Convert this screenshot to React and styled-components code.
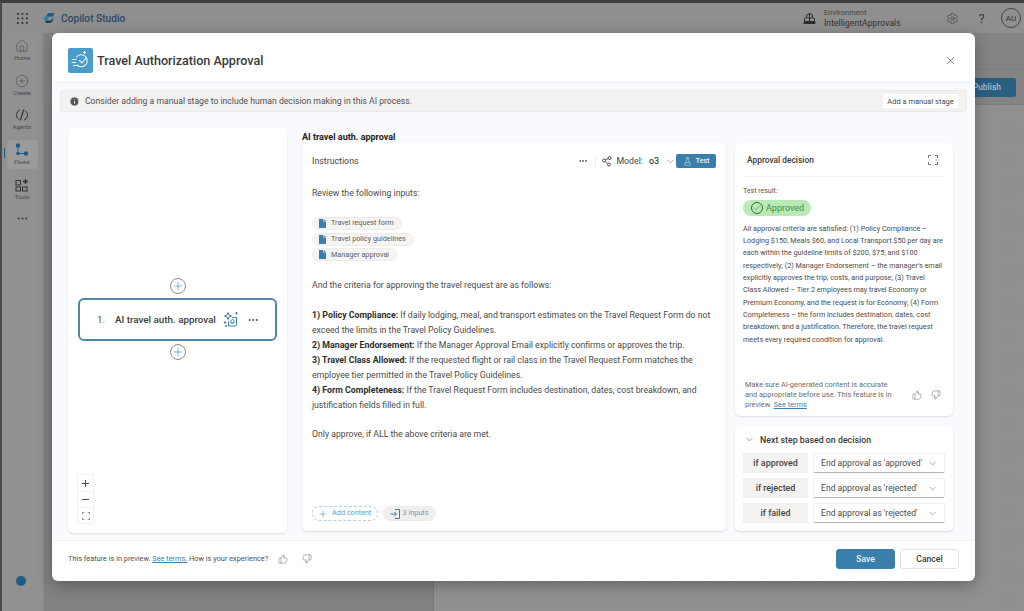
import styled, { createGlobalStyle } from "styled-components";
import {
  Home,
  CirclePlus,
  X,
  Plus,
  Minus,
  Settings,
  ChevronDown,
  ThumbsUp,
  ThumbsDown,
  FlaskConical,
  Ellipsis,
  Info,
  Check,
} from "lucide-react";

const ACCENT = "#3a7fab";
const FONT = `Roboto, "Open Sans", "Liberation Sans", sans-serif`;

const GlobalStyle = createGlobalStyle`
  html, body { margin: 0; padding: 0; height: 100%; overflow: hidden; }
  body { font-family: ${FONT}; color: #3b3b3b; }
  * { box-sizing: border-box; }
`;

const Shell = styled.div`
  position: relative;
  width: 1024px;
  height: 611px;
  display: flex;
  flex-direction: column;
  background: #848484;
  border-top: 3px solid #3f3f3f;
  border-left: 2px solid #4a4a4a;
  overflow: hidden;
`;

const TopBar = styled.header`
  height: 30px;
  flex: none;
  display: flex;
  align-items: center;
  background: #8f8f8f;
  color: #2f2f2f;
  padding-left: 15px;
`;

const Brand = styled.span`
  font-size: 10.2px;
  font-weight: 500;
  color: #2b4b63;
  margin-left: 6px;
`;

const Spacer = styled.div`
  flex: 1;
`;

const EnvText = styled.div`
  display: flex;
  flex-direction: column;
  margin: 0 18px 0 8px;
  width: 96px;
  line-height: 10px;
`;

const EnvLabel = styled.span`
  font-size: 7.6px;
  color: #444;
`;

const EnvName = styled.span`
  font-size: 8.7px;
  color: #333;
`;

const TopIcon = styled.span`
  display: flex;
  width: 29px;
  justify-content: center;
  font-size: 13px;
  color: #3c3c3c;
`;

const Avatar = styled.span`
  width: 20px;
  height: 20px;
  margin: 0 3px 0 5px;
  border: 1px solid #444;
  border-radius: 50%;
  font-size: 8px;
  display: flex;
  align-items: center;
  justify-content: center;
`;

const Body = styled.div`
  flex: 1;
  display: flex;
  min-height: 0;
`;

const Sidebar = styled.nav`
  width: 42px;
  flex: none;
  background: #919191;
  border-right: 1px solid #868686;
  display: flex;
  flex-direction: column;
  align-items: center;
  padding: 3px 1px 0 0;
  position: relative;
`;

const NavItem = styled.div`
  position: relative;
  width: 31px;
  height: 29px;
  margin-bottom: 5.7px;
  border-radius: 4px;
  display: flex;
  flex-direction: column;
  align-items: center;
  justify-content: center;
  font-size: 6px;
  line-height: 8px;
  color: #484848;
  background: ${(p) => (p.$active ? "#9b9b9b" : "transparent")};
  svg { margin-bottom: 1px; }
  ${(p) =>
    p.$active &&
    `&::before {
      content: "";
      position: absolute;
      left: -3px;
      top: 8px;
      width: 1.5px;
      height: 10px;
      background: #235a80;
    }`}
`;

const MoreNav = styled.div`
  display: flex;
  margin-top: 3px;
  color: #3c3c3c;
`;

const HelpDot = styled.span`
  margin: auto 2px 25px 0;
  width: 10px;
  height: 10px;
  border-radius: 50%;
  background: #1f5b85;
`;

const Workspace = styled.main`
  flex: 1;
  display: flex;
  flex-direction: column;
`;

const SubBar = styled.div`
  height: 36px;
  margin-top: 36px;
  flex: none;
  display: flex;
  justify-content: flex-end;
  align-items: center;
  padding-right: 8px;
  border-top: 1px solid #7d7d7d;
  border-bottom: 1px solid #7d7d7d;
`;

const PublishButton = styled.button`
  width: 60px;
  height: 19px;
  border: none;
  border-radius: 2px;
  background: #2b5f80;
  color: #a5c0d2;
  font: 500 8.5px ${FONT};
  text-align: right;
  padding-right: 15px;
`;

const Panes = styled.div`
  flex: 1;
  display: flex;
`;

const FlowList = styled.div`
  width: 390px;
  flex: none;
  background: #828282;
  border-right: 1px solid #787878;
`;

const DotCanvas = styled.div`
  flex: 1;
  background-color: #909090;
  background-image: radial-gradient(#858585 0.6px, transparent 0.8px);
  background-size: 11px 11px;
`;

const Modal = styled.section`
  position: absolute;
  left: 50px;
  top: 30px;
  width: 923px;
  height: 548px;
  border-radius: 6px;
  background: #fff;
  display: flex;
  flex-direction: column;
  box-shadow: 0 4px 16px rgba(0, 0, 0, 0.3);
  overflow: hidden;
`;

const ModalHeader = styled.div`
  height: 50px;
  flex: none;
  display: flex;
  align-items: center;
  padding: 5px 16px 0;
  gap: 4px;
  border-bottom: 1px solid #eef1f5;
`;

const LogoTile = styled.div`
  width: 25px;
  height: 25px;
  border-radius: 2px;
  background: #4a9ccb;
  display: flex;
  align-items: center;
  justify-content: center;
`;

const ModalTitle = styled.h1`
  margin: 0;
  flex: 1;
  font-size: 12.6px;
  font-weight: 500;
  color: #3a3a3a;
`;

const CloseIcon = styled.span`
  display: flex;
  margin-right: 2px;
  color: #444;
`;

const Content = styled.div`
  flex: 1;
  min-height: 0;
  background: #f8fafd;
  padding: 7px 8px 0;
  display: flex;
  flex-direction: column;
`;

const Banner = styled.div`
  height: 22px;
  flex: none;
  background: #f3f2f0;
  border: 1px solid #ebeae8;
  border-radius: 2px;
  display: flex;
  align-items: center;
  padding: 0 8px;
  gap: 5px;
  font-size: 8.65px;
  color: #505050;
`;

const BannerButton = styled.button`
  margin-left: auto;
  height: 14px;
  width: 75px;
  border: none;
  background: #fff;
  padding: 0;
  font: 7.5px ${FONT};
  color: #4a4a4a;
`;

const Columns = styled.div`
  flex: 1;
  min-height: 0;
  display: flex;
  align-items: flex-start;
  padding: 16px 0 7px 8px;
`;

const CanvasPanel = styled.div`
  position: relative;
  flex: none;
  width: 219px;
  height: 405px;
  margin-right: 15px;
  background: #fff;
  border-radius: 5px;
  box-shadow: 0 1px 2px rgba(0, 0, 0, 0.12);
  display: flex;
  flex-direction: column;
  align-items: center;
  padding-top: 150px;
`;

const AddStep = styled.span`
  width: 16px;
  height: 16px;
  border-radius: 50%;
  border: 1px solid #8e8e8e;
  background: #fff;
  color: ${ACCENT};
  display: flex;
  align-items: center;
  justify-content: center;
  margin: 0 0 4px;
  & + div + & {
    margin: 3px 0 0;
  }
`;

const StageCard = styled.div`
  width: 199px;
  height: 43px;
  border: 2px solid #4f88ab;
  border-radius: 6px;
  display: flex;
  align-items: center;
  padding: 0 16px 0 17px;
  font-size: 9.8px;
  color: #3c3c3c;
`;

const StageNumber = styled.span`
  color: #555;
  margin-right: 10px;
`;

const StageName = styled.span`
  font-weight: 500;
  white-space: nowrap;
`;

const StageIcon = styled.span`
  display: flex;
  margin: 0 auto 0 6px;
`;

const ZoomControls = styled.div`
  position: absolute;
  left: 9px;
  bottom: 9px;
  width: 17px;
  display: flex;
  flex-direction: column;
  border: 1px solid #f1f1f1;
  background: #fff;
`;

const ZoomButton = styled.span`
  height: 16px;
  display: flex;
  align-items: center;
  justify-content: center;
  color: #3c3c3c;
  & + & {
    border-top: 1px solid #f1f1f1;
  }
`;

const MiddleColumn = styled.div`
  flex: none;
  width: 424px;
  margin-right: 9px;
  display: flex;
  flex-direction: column;
`;

const StepTitle = styled.h2`
  margin: 0;
  height: 15px;
  line-height: 18px;
  font-size: 9px;
  font-weight: 700;
  color: #222;
`;

const InstructionsCard = styled.div`
  height: 388px;
  background: #fff;
  border-radius: 5px;
  box-shadow: 0 1px 2px rgba(0, 0, 0, 0.12);
  padding: 0 10px;
  display: flex;
  flex-direction: column;
  font-size: 8.7px;
  line-height: 14.9px;
  color: #4a4a4a;
`;

const CardHeader = styled.div`
  height: 36px;
  flex: none;
  display: flex;
  align-items: center;
  font-size: 8.8px;
  color: #444;
`;

const HeaderDivider = styled.span`
  width: 1px;
  height: 12px;
  background: #ececec;
  margin: 0 6px 0 7px;
`;

const ModelLabel = styled.span`
  margin-left: 4px;
  margin-right: 6px;
  font-size: 8.8px;
`;

const ModelValue = styled.span`
  font-weight: 500;
  margin-right: 6px;
`;

const TestButton = styled.button`
  width: 40px;
  height: 14px;
  border: none;
  border-radius: 2px;
  background: ${ACCENT};
  color: #e9f2f7;
  padding: 0;
  display: flex;
  align-items: center;
  justify-content: center;
  gap: 4px;
  font: 500 7px ${FONT};
`;

const Paragraph = styled.p`
  margin: 0;
  min-height: 14.9px;
`;

const Intro = styled(Paragraph)`
  margin-top: 7px;
  margin-bottom: 16px;
`;

const ChipList = styled.div`
  display: flex;
  flex-direction: column;
  align-items: flex-start;
  gap: 2.7px;
  margin-bottom: 17px;
`;

const FileChip = styled.span`
  height: 13px;
  display: inline-flex;
  align-items: center;
  gap: 5px;
  padding: 0 7px 0 6px;
  border: 1px solid #ececec;
  border-radius: 7px;
  background: #f5f4f3;
  font-size: 7.25px;
  line-height: 12px;
  color: #606060;
`;

const Criterion = styled.b`
  font-weight: 700;
  font-size: 8.8px;
  color: #2e2e2e;
`;

const CardFooter = styled.div`
  margin-top: auto;
  margin-bottom: 10px;
  display: flex;
  gap: 5px;
`;

const FooterChip = styled.span`
  height: 15px;
  display: inline-flex;
  align-items: center;
  gap: ${(p) => (p.$dashed ? "4px" : "3px")};
  border-radius: 8px;
  padding: ${(p) => (p.$dashed ? "0 5px 0 5px" : "0 6px 0 6px")};
  font-size: 7.3px;
  color: #6a9dbd;
  border: 1px ${(p) => (p.$dashed ? "dashed #b8d0df" : "solid #eeecea")};
  background: ${(p) => (p.$dashed ? "#fff" : "#f1efed")};
`;

const RightColumn = styled.div`
  flex: none;
  width: 218px;
  display: flex;
  flex-direction: column;
  gap: 10px;
  padding-top: 15px;
`;

const DecisionCard = styled.div`
  height: 273px;
  background: #fff;
  border-radius: 5px;
  box-shadow: 0 1px 2px rgba(0, 0, 0, 0.12);
  padding: 0 8px;
  display: flex;
  flex-direction: column;
`;

const DecisionHeader = styled.div`
  height: 34px;
  margin: 0 2px 0 2px;
  flex: none;
  display: flex;
  align-items: center;
  justify-content: space-between;
  padding: 1px 5px 0 2px;
  font-size: 8.4px;
  font-weight: 500;
  color: #3a3a3a;
  border-bottom: 1px solid #f0f0f0;
`;

const ResultLabel = styled.div`
  margin-top: 7.5px;
  font-size: 7px;
  line-height: 12px;
  color: #555;
`;

const ApprovedPill = styled.div`
  width: 68px;
  height: 16px;
  margin-top: 3.5px;
  border-radius: 8px;
  background: #b9eab5;
  color: #3f8f4b;
  display: flex;
  align-items: center;
  gap: 3px;
  padding-left: 8px;
  font-size: 9px;
`;

const CheckRing = styled.span`
  width: 12px;
  height: 12px;
  border-radius: 50%;
  border: 1px solid #2f6b3a;
  color: #2f6b3a;
  display: flex;
  align-items: center;
  justify-content: center;
`;

const ResultText = styled.p`
  margin: 6.5px 0 0;
  padding-right: 1px;
  font-size: 7.25px;
  line-height: 12.35px;
  color: #4c4c4c;
`;

const Disclaimer = styled.div`
  margin-top: auto;
  margin-bottom: 6px;
  padding-left: 2px;
  display: flex;
  align-items: center;
  font-size: 7.4px;
  line-height: 10px;
  color: #6c6c6c;
`;

const DisclaimerText = styled.div`
  width: 148px;
`;

const Feedback = styled.span`
  display: flex;
  gap: 9px;
  margin-left: auto;
  margin-right: 4px;
  color: #555;
`;

const TermsLink = styled.a`
  color: #3a7fab;
  text-decoration: underline;
`;

const NextStepCard = styled.div`
  height: 105px;
  background: #fff;
  border-radius: 5px;
  box-shadow: 0 1px 2px rgba(0, 0, 0, 0.12);
  padding: 0 8px;
`;

const NextStepTitle = styled.div`
  height: 27px;
  display: flex;
  align-items: center;
  gap: 5px;
  padding-left: 1px;
  font-size: 8.8px;
  font-weight: 500;
  color: #3a3a3a;
`;

const RuleRow = styled.div`
  display: grid;
  grid-template-columns: 65px 132px;
  column-gap: 5px;
  height: 20px;
  margin-bottom: 5px;
`;

const RuleLabel = styled.div`
  display: flex;
  align-items: center;
  justify-content: center;
  background: #f3f2f1;
  font-size: 8.9px;
  font-weight: 500;
  color: #444;
`;

const RuleSelect = styled.div`
  display: flex;
  align-items: center;
  justify-content: space-between;
  padding: 0 6px 0 7px;
  border-radius: 2px;
  background: #fff;
  border: 1px solid #f0f0f0;
  border-bottom-color: #b5b5b5;
  font-size: 8.6px;
  color: #4a4a4a;
  white-space: nowrap;
`;

const ModalFooter = styled.footer`
  height: 41px;
  flex: none;
  display: flex;
  align-items: center;
  padding: 0 16px 5px;
  border-top: 1px solid #eef1f5;
  font-size: 7.35px;
  color: #505050;
`;

const FooterFeedback = styled.span`
  display: flex;
  gap: 14px;
  margin-left: 10px;
  color: #555;
`;

const Actions = styled.div`
  margin-left: auto;
  display: flex;
  gap: 5px;
`;

const ActionButton = styled.button`
  width: 59px;
  height: 20px;
  border-radius: 3px;
  font: 500 8.6px ${FONT};
  padding: 0;
  color: ${(p) => (p.$primary ? "#eaf3f8" : "#3a3a3a")};
  background: ${(p) => (p.$primary ? ACCENT : "#fff")};
  border: 1px solid ${(p) => (p.$primary ? ACCENT : "#e3e3e3")};
`;

const BrandGap = styled.span`
  width: 14px;
`;

const AppGrid = () => (
  <svg width="11" height="11" viewBox="0 0 11 11" fill="#333">
    {[1, 5.5, 10].flatMap((y) =>
      [1, 5.5, 10].map((x) => <rect key={`${x}-${y}`} x={x - 1} y={y - 1} width="1.800" height="1.800" />)
    )}
  </svg>
);

const CopilotLogo = () => (
  <svg width="13" height="12" viewBox="0 0 13 12">
    <path d="M1 6.500 4 4h4L5.500 8H2.500Z" fill="#2f7fb0" />
    <path d="M4 3.500 6.500 1H12.500L11 4.500H7Z" fill="#1f5b85" />
    <path d="M3 8.500H9L11.500 5 10.500 9.500 8 11H4Z" fill="#163f5e" />
  </svg>
);

const EnvIcon = () => (
  <svg width="13" height="13" viewBox="0 0 13 13" fill="none" stroke="#2e2e2e" strokeWidth="1">
    <path d="M3.500 5.500V3L6.500 1.500 9.500 3V5.500" />
    <path d="M1.500 9V6.500L4 5.500 6.500 6.500 9 5.500 11.500 6.500V9" />
    <path d="M1 9.500H12V11.500H1Z" fill="#2e2e2e" />
    <path d="M6.500 1.500V9" />
  </svg>
);

const AgentsIcon = () => (
  <svg width="14" height="14" viewBox="0 0 14 14" fill="none" stroke="#333" strokeWidth="1">
    <path d="M5 1.800A5.500 5.500 0 0 0 4 11.600M9 12.200A5.500 5.500 0 0 0 10 2.400" />
    <path d="M8.800 1.500 5.200 12.500" strokeWidth="1.200" />
  </svg>
);

const FlowsIcon = () => (
  <svg width="14" height="14" viewBox="0 0 14 14" fill="#1f5b85">
    <circle cx="3" cy="2.500" r="2.200" />
    <circle cx="3" cy="10.500" r="1.700" />
    <circle cx="11" cy="10.500" r="2.200" />
    <path d="M2.600 4h.8v5h-.8ZM4 10.100h5v.8H4Z" />
  </svg>
);

const ToolsIcon = () => (
  <svg width="14" height="14" viewBox="0 0 14 14" fill="none" stroke="#333" strokeWidth="1">
    <rect x="1" y="2.500" width="4.500" height="4.500" />
    <rect x="1" y="9" width="4.500" height="4" />
    <rect x="7.500" y="9" width="4.500" height="4" />
    <path d="M10.500 1V6M8 3.500H13" strokeWidth="1.400" />
  </svg>
);

const FlowCheckLogo = () => (
  <svg width="20" height="20" viewBox="0 0 20 20" fill="none" stroke="#f2f9fd" strokeWidth="1.100" strokeLinecap="round">
    <path d="M5.500 7A6 6 0 1 1 6 15" />
    <path d="M8.500 10.500 11 13 15 8" />
    <path d="M1.500 9.500H5M1 12.500H4.500M2.500 15.500H6" />
    <path d="M13.500 1.500V3.500M12.500 2.500H14.500" />
  </svg>
);

const SparkleBox = () => (
  <svg width="17" height="17" viewBox="0 0 17 17" fill="none" stroke="#3a7fab" strokeWidth="1">
    <path d="M6 1.500 7 4 9.500 5 7 6 6 8.500 5 6 2.500 5 5 4Z" />
    <path d="M10 6.500H14.500V13.500A1.500 1.500 0 0 1 13 15H6.500V10.500" />
    <path d="M9 9.500 10.500 8 12 9.500V12H9Z" />
    <circle cx="3" cy="11.500" r=".8" fill="#3a7fab" />
    <circle cx="4" cy="15" r=".6" fill="#3a7fab" />
    <path d="M14.500 1V3.500M13.200 2.200H15.800" />
  </svg>
);

const Corners = ({ size = 10, color = "#3c3c3c" }) => (
  <svg width={size} height={size} viewBox="0 0 10 10" fill="none" stroke={color} strokeWidth=".7">
    <path d="M.5 3V.5H3M7 .5H9.500V3M9.500 7V9.500H7M3 9.500H.5V7" />
  </svg>
);

const ModelIcon = () => (
  <svg width="10" height="11" viewBox="0 0 10 11" fill="none" stroke="#444" strokeWidth=".9">
    <circle cx="2" cy="4.500" r="1.500" />
    <circle cx="7.500" cy="2" r="1.500" />
    <circle cx="7" cy="8.500" r="1.500" />
    <path d="M3.400 3.900 6 2.700M3.300 5.400 5.600 7.800" />
  </svg>
);

const FileIcon = () => (
  <svg width="7" height="9" viewBox="0 0 7 9" fill="#3a7fab">
    <path d="M0 0H4V2.500H7V9H0ZM4.700 0 7 2H4.700Z" />
  </svg>
);

const InputsIcon = () => (
  <svg width="10" height="10" viewBox="0 0 10 10" fill="none" stroke="#3a7fab" strokeWidth="1">
    <path d="M5 .5H9.500V9.500H5" />
    <path d="M.5 5H6.500M4.500 3 6.500 5 4.500 7" />
  </svg>
);

const rules = [
  ["if approved", "End approval as 'approved'"],
  ["if rejected", "End approval as 'rejected'"],
  ["if failed", "End approval as 'rejected'"],
];

const chips = ["Travel request form", "Travel policy guidelines", "Manager approval"];

const App = () => (
  <>
    <GlobalStyle />
    <Shell>
      <TopBar>
        <AppGrid />
        <BrandGap />
        <CopilotLogo />
        <Brand>Copilot Studio</Brand>
        <Spacer />
        <EnvIcon />
        <EnvText>
          <EnvLabel>Environment</EnvLabel>
          <EnvName>IntelligentApprovals</EnvName>
        </EnvText>
        <TopIcon>
          <Settings size={13} strokeWidth={1.2} />
        </TopIcon>
        <TopIcon>?</TopIcon>
        <Avatar>AU</Avatar>
      </TopBar>
      <Body>
        <Sidebar>
          <NavItem>
            <Home size={14} strokeWidth={1} />
            Home
          </NavItem>
          <NavItem>
            <CirclePlus size={14} strokeWidth={1} />
            Create
          </NavItem>
          <NavItem>
            <AgentsIcon />
            Agents
          </NavItem>
          <NavItem $active>
            <FlowsIcon />
            Flows
          </NavItem>
          <NavItem>
            <ToolsIcon />
            Tools
          </NavItem>
          <MoreNav>
            <Ellipsis size={13} />
          </MoreNav>
          <HelpDot />
        </Sidebar>
        <Workspace>
          <SubBar>
            <PublishButton>Publish</PublishButton>
          </SubBar>
          <Panes>
            <FlowList />
            <DotCanvas />
          </Panes>
        </Workspace>
      </Body>

      <Modal>
        <ModalHeader>
          <LogoTile>
            <FlowCheckLogo />
          </LogoTile>
          <ModalTitle>Travel Authorization Approval</ModalTitle>
          <CloseIcon>
            <X size={13} strokeWidth={1.2} />
          </CloseIcon>
        </ModalHeader>

        <Content>
          <Banner>
            <Info size={11} fill="#555" color="#f3f2f0" />
            Consider adding a manual stage to include human decision making in this AI process.
            <BannerButton>Add a manual stage</BannerButton>
          </Banner>

          <Columns>
            <CanvasPanel>
              <AddStep>
                <Plus size={12} strokeWidth={1.2} />
              </AddStep>
              <StageCard>
                <StageNumber>1.</StageNumber>
                <StageName>AI travel auth. approval</StageName>
                <StageIcon>
                  <SparkleBox />
                </StageIcon>
                <Ellipsis size={12} />
              </StageCard>
              <AddStep>
                <Plus size={12} strokeWidth={1.2} />
              </AddStep>
              <ZoomControls>
                <ZoomButton>
                  <Plus size={11} />
                </ZoomButton>
                <ZoomButton>
                  <Minus size={11} />
                </ZoomButton>
                <ZoomButton>
                  <Corners size={8} />
                </ZoomButton>
              </ZoomControls>
            </CanvasPanel>

            <MiddleColumn>
              <StepTitle>AI travel auth. approval</StepTitle>
              <InstructionsCard>
                <CardHeader>
                  Instructions
                  <Spacer />
                  <Ellipsis size={10} />
                  <HeaderDivider />
                  <ModelIcon />
                  <ModelLabel>Model:</ModelLabel>
                  <ModelValue>o3</ModelValue>
                  <ChevronDown size={11} strokeWidth={1} />
                  <TestButton>
                    <FlaskConical size={9} strokeWidth={1.2} />
                    Test
                  </TestButton>
                </CardHeader>
                <Intro>Review the following inputs:</Intro>
                <ChipList>
                  {chips.map((chip) => (
                    <FileChip key={chip}>
                      <FileIcon />
                      {chip}
                    </FileChip>
                  ))}
                </ChipList>
                <Paragraph>And the criteria for approving the travel request are as follows:</Paragraph>
                <Paragraph />
                <Paragraph>
                  <Criterion>1) Policy Compliance:</Criterion> If daily lodging, meal, and transport estimates on the
                  Travel Request Form do not exceed the limits in the Travel Policy Guidelines.
                </Paragraph>
                <Paragraph>
                  <Criterion>2) Manager Endorsement:</Criterion> If the Manager Approval Email explicitly confirms or
                  approves the trip.
                </Paragraph>
                <Paragraph>
                  <Criterion>3) Travel Class Allowed:</Criterion> If the requested flight or rail class in the Travel
                  Request Form matches the employee tier permitted in the Travel Policy Guidelines.
                </Paragraph>
                <Paragraph>
                  <Criterion>4) Form Completeness:</Criterion> If the Travel Request Form includes destination, dates,
                  cost breakdown, and justification fields filled in full.
                </Paragraph>
                <Paragraph />
                <Paragraph>Only approve, if ALL the above criteria are met.</Paragraph>
                <CardFooter>
                  <FooterChip $dashed>
                    <Plus size={10} strokeWidth={1.2} color={ACCENT} />
                    Add content
                  </FooterChip>
                  <FooterChip>
                    <InputsIcon />
                    3 inputs
                  </FooterChip>
                </CardFooter>
              </InstructionsCard>
            </MiddleColumn>

            <RightColumn>
              <DecisionCard>
                <DecisionHeader>
                  Approval decision
                  <Corners />
                </DecisionHeader>
                <ResultLabel>Test result:</ResultLabel>
                <ApprovedPill>
                  <CheckRing>
                    <Check size={8} strokeWidth={1.4} />
                  </CheckRing>
                  Approved
                </ApprovedPill>
                <ResultText>
                  All approval criteria are satisfied: (1) Policy Compliance – Lodging $150, Meals $60, and Local
                  Transport $50 per day are each within the guideline limits of $200, $75, and $100 respectively; (2)
                  Manager Endorsement – the manager's email explicitly approves the trip, costs, and purpose; (3)
                  Travel Class Allowed – Tier 2 employees may travel Economy or Premium Economy, and the request is for
                  Economy; (4) Form Completeness – the form includes destination, dates, cost breakdown, and a
                  justification. Therefore, the travel request meets every required condition for approval.
                </ResultText>
                <Disclaimer>
                  <DisclaimerText>
                    Make sure AI-generated content is accurate and appropriate before use. This feature is in preview.{" "}
                    <TermsLink>See terms</TermsLink>
                  </DisclaimerText>
                  <Feedback>
                    <ThumbsUp size={10} strokeWidth={1} />
                    <ThumbsDown size={10} strokeWidth={1} />
                  </Feedback>
                </Disclaimer>
              </DecisionCard>

              <NextStepCard>
                <NextStepTitle>
                  <ChevronDown size={11} strokeWidth={1} />
                  Next step based on decision
                </NextStepTitle>
                {rules.map(([label, value]) => (
                  <RuleRow key={label}>
                    <RuleLabel>{label}</RuleLabel>
                    <RuleSelect>
                      {value}
                      <ChevronDown size={11} strokeWidth={1} />
                    </RuleSelect>
                  </RuleRow>
                ))}
              </NextStepCard>
            </RightColumn>
          </Columns>
        </Content>

        <ModalFooter>
          This feature is in preview.&nbsp;<TermsLink>See terms.</TermsLink>&nbsp;How is your experience?
          <FooterFeedback>
            <ThumbsUp size={10} strokeWidth={1} />
            <ThumbsDown size={10} strokeWidth={1} />
          </FooterFeedback>
          <Actions>
            <ActionButton $primary>Save</ActionButton>
            <ActionButton>Cancel</ActionButton>
          </Actions>
        </ModalFooter>
      </Modal>
    </Shell>
  </>
);

export default App;
